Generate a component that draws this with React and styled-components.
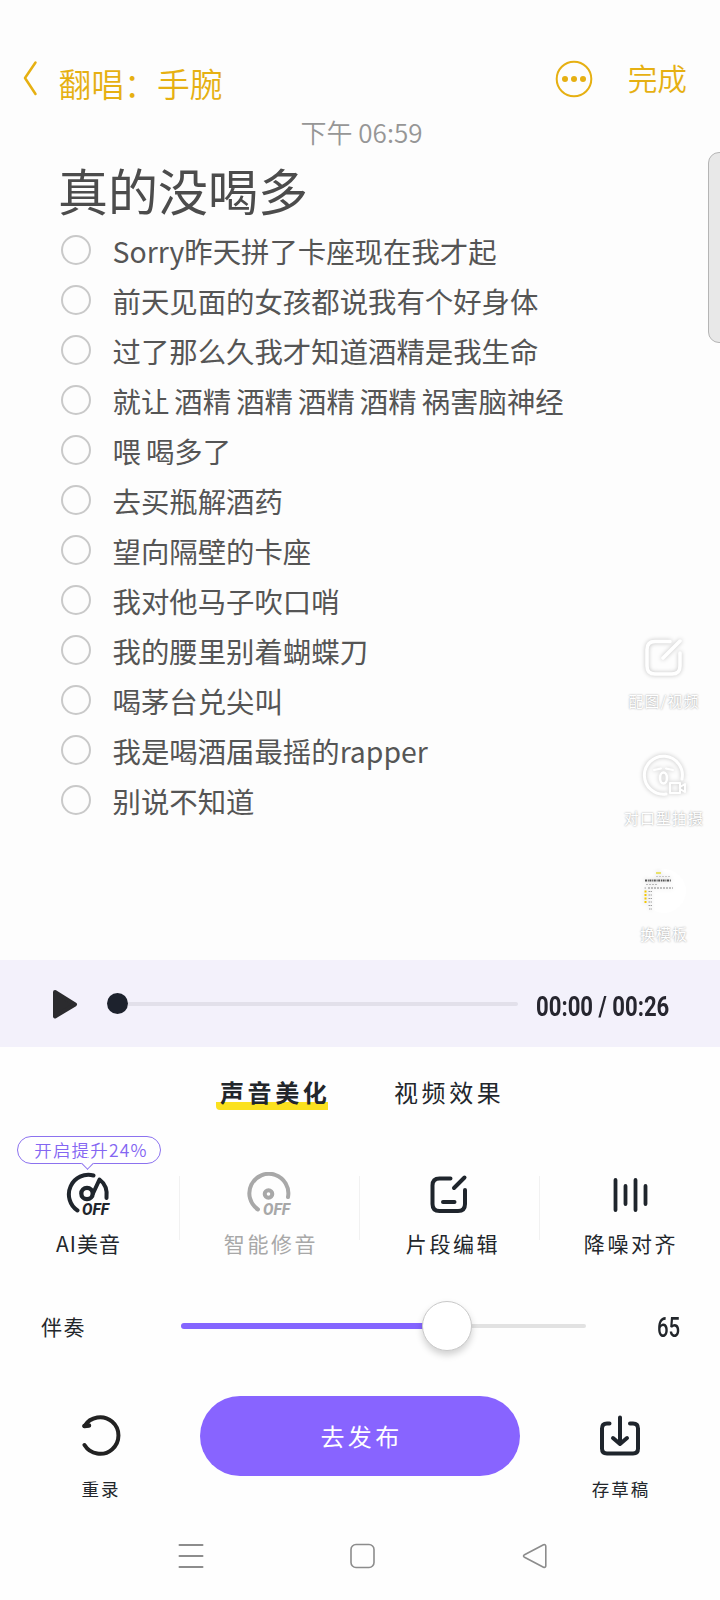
import React, { useState } from "react";
import styled, { createGlobalStyle, css } from "styled-components";

// constants
const LYRICS = [
  "Sorry昨天拼了卡座现在我才起",
  "前天见面的女孩都说我有个好身体",
  "过了那么久我才知道酒精是我生命",
  "就让 酒精 酒精 酒精 酒精 祸害脑神经",
  "喂 喝多了",
  "去买瓶解酒药",
  "望向隔壁的卡座",
  "我对他马子吹口哨",
  "我的腰里别着蝴蝶刀",
  "喝茅台兑尖叫",
  "我是喝酒届最摇的rapper",
  "别说不知道",
];

const GlobalStyle = createGlobalStyle`
  * {
    box-sizing: border-box;
  }
  body {
    margin: 0;
    background: #fefefe;
    font-family: "Noto Sans CJK SC", sans-serif;
    color: #22262b;
  }
  svg {
    display: block;
    flex: none;
    fill: none;
    stroke-linecap: round;
    stroke-linejoin: round;
  }
`;

const Screen = styled.div`
  width: 720px;
  height: 1600px;
  overflow: hidden;
  display: flex;
  flex-direction: column;
`;

/* note */
const Note = styled.section`
  position: relative;
  height: 960px;
  background: #fdfdfd;
  font-weight: 350;
`;
const NoteHeader = styled.header`
  display: flex;
  align-items: center;
  height: 118px;
  padding: 40px 33px 0 22px;
  color: #e6b012;
`;
const NoteName = styled.div`
  flex: 1;
  margin: 8px 0 0 20.5px;
  font-size: 32.8px;
  line-height: 40px;
`;
const DoneButton = styled.div`
  margin: -2px 0 0 35px;
  font-size: 29.7px;
  line-height: 40px;
`;
const NoteTime = styled.div`
  height: 32px;
  padding-left: 3px;
  margin-top: -2px;
  margin-bottom: 2px;
  text-align: center;
  font-size: 26px;
  line-height: 32px;
  color: #969696;
`;
const NoteTitle = styled.h1`
  margin: 0;
  height: 75px;
  padding: 2px 0 0 58px;
  font-size: 50px;
  line-height: 75px;
  font-weight: 400;
  color: #4c4c4c;
`;
const LyricList = styled.ul`
  margin: 0;
  padding: 0 0 0 61px;
  list-style: none;
`;
const Lyric = styled.li`
  display: flex;
  align-items: center;
  height: 50px;
  font-size: 28.4px;
  font-weight: 400;
  white-space: pre;
  word-spacing: -1.3px;
  color: #555;
`;
const LyricText = styled.span`
  margin: 2px 0 0 21px;
  line-height: 40px;
`;
const Bullet = styled.span`
  width: 30px;
  height: 30px;
  margin-right: 0.5px;
  border: 2px solid #c9c9c9;
  border-radius: 50%;
`;
const EdgeHandle = styled.div`
  position: absolute;
  top: 152px;
  right: -12px;
  width: 24px;
  height: 191px;
  background: #e8e8e8;
  border: 1px solid #b5b5b5;
  border-radius: 11px;
`;
const SideBar = styled.aside`
  position: absolute;
  top: 636px;
  right: 10px;
  width: 92px;
  display: flex;
  flex-direction: column;
`;
const SideItem = styled.div`
  display: flex;
  flex-direction: column;
  align-items: center;
  height: 116.5px;
  svg {
    filter: drop-shadow(0 0 2px rgba(0, 0, 0, 0.24));
  }
`;
const SideLabel = styled.span`
  margin-top: 9px;
  font-size: 15px;
  line-height: 24px;
  letter-spacing: 1px;
  font-weight: 400;
  color: #fff;
  text-shadow: 0 0 2px rgba(0, 0, 0, 0.42);
`;
const Thumb = styled.div`
  width: 44px;
  height: 44px;
  padding-top: 3px;
  border-radius: 50%;
  background: #fff;
`;

/* player */
const Player = styled.section`
  display: flex;
  align-items: center;
  height: 87px;
  padding-left: 52px;
  background: #f3f1fb;
`;
const Seek = styled.div`
  display: flex;
  align-items: center;
  width: 411px;
  margin-left: 29px;
`;
const SeekKnob = styled.span`
  width: 21px;
  height: 21px;
  border-radius: 50%;
  background: #1d222d;
`;
const SeekTrack = styled.span`
  flex: 1;
  height: 4px;
  border-radius: 0 2px 2px 0;
  background: #e2e0ea;
`;
const Narrow = styled.span`
  display: inline-block;
  padding-top: 3px;
  font-family: Roboto, sans-serif;
  font-size: 27.5px;
  font-weight: ${(props) => props.$weight};
  line-height: 32px;
  white-space: nowrap;
  transform: scaleX(${(props) => props.$ratio});
  transform-origin: left center;
`;
const Clock = styled.div`
  width: 140px;
  margin: 3px 0 0 18px;
  color: #26262f;
`;

/* tabs */
const Tabs = styled.nav`
  display: flex;
  height: 89px;
  padding: 26px 0 0 216px;
`;
const Tab = styled.div`
  width: 112px;
  height: 37px;
  padding-left: 4px;
  font-size: 24px;
  line-height: 37px;
  letter-spacing: 3.6px;
  white-space: nowrap;
  & + & {
    margin-left: 62px;
  }
  ${(props) =>
    props.$active &&
    css`
      font-weight: 700;
      background: linear-gradient(#fbe11e, #fbe11e) 0 29px / 112px 8px no-repeat;
      border-radius: 0 0 0 4px;
    `}
`;

/* tools */
const Tools = styled.section`
  position: relative;
  display: grid;
  grid-template-columns: repeat(4, 180px);
  height: 150px;
`;
const Tool = styled.div`
  display: flex;
  flex-direction: column;
  align-items: center;
  padding-top: 36px;
  color: ${(props) => (props.$disabled ? "#a8a8a8" : "#22262b")};
  background: ${(props) =>
    props.$last
      ? "none"
      : "linear-gradient(#f1f1f1, #f1f1f1) right 40px / 1px 64px no-repeat"};
  background-position: right 0 top 40px;
`;
const ToolLabel = styled.span`
  margin: 9px 0 0 ${(props) => props.$shift || "2px"};
  font-size: 21px;
  line-height: 32px;
  letter-spacing: ${(props) => props.$spacing || "2.6px"};
`;
const Tip = styled.div`
  position: absolute;
  top: 0;
  left: 17px;
  width: 144px;
  height: 28px;
  padding-left: 4px;
  border: 1px solid #8c72ef;
  border-radius: 14px;
  background: #fff;
  color: #8466f2;
  font-size: 17.5px;
  line-height: 26px;
  font-weight: 350;
  letter-spacing: 1.2px;
  text-align: center;
  white-space: nowrap;
  &::after {
    content: "";
    position: absolute;
    left: 65px;
    bottom: -5px;
    width: 8px;
    height: 8px;
    background: #fff;
    border: solid #8c72ef;
    border-width: 0 1px 1px 0;
    transform: rotate(45deg);
  }
`;

/* volume */
const VolumeRow = styled.section`
  display: flex;
  align-items: center;
  height: 80px;
  padding-left: 41px;
`;
const VolumeLabel = styled.span`
  width: 140px;
  font-size: 21px;
  line-height: 32px;
  letter-spacing: 1.5px;
`;
const VolumeTrack = styled.div`
  display: flex;
  align-items: center;
  width: 405px;
  margin-right: 71px;
`;
const VolumeFill = styled.span`
  height: 6px;
  border-radius: 3px 0 0 3px;
  background: #8465ff;
`;
const VolumeKnob = styled.span`
  width: 50px;
  height: 50px;
  flex: none;
  margin: 0 -27px 0 -22px;
  border: 1px solid #c9c9c9;
  border-radius: 50%;
  background: #fff;
  box-shadow: 0 4px 7px rgba(0, 0, 0, 0.18);
  z-index: 1;
`;
const VolumeRest = styled.span`
  flex: 1;
  height: 4px;
  border-radius: 0 2px 2px 0;
  background: #e2e2e2;
`;

/* bottom buttons */
const Actions = styled.section`
  display: flex;
  align-items: flex-start;
  justify-content: space-between;
  height: 146px;
  padding-top: 30px;
`;
const Action = styled.div`
  width: 200px;
  display: flex;
  flex-direction: column;
  align-items: center;
  padding-top: 19px;
`;
const ActionLabel = styled.span`
  margin-top: 18px;
  padding-left: 2px;
  font-size: 17.5px;
  line-height: 28px;
  letter-spacing: 2px;
`;
const PublishButton = styled.button`
  width: 320px;
  height: 80px;
  border: 0;
  padding: 0 0 0 3px;
  border-radius: 40px;
  background: #8864ff;
  color: #fff;
  font: 400 24px/36px "Noto Sans CJK SC", sans-serif;
  letter-spacing: 3.4px;
`;
const SystemNav = styled.nav`
  display: flex;
  align-items: center;
  height: 88px;
  padding-left: 178px;
  gap: 146px;
`;

const OffText = ({ fill }) => (
  <text
    x="17"
    y="42.500"
    fill={fill}
    fontFamily="Roboto, sans-serif"
    fontSize="16"
    fontWeight="800"
    fontStyle="italic"
    textLength="27"
    lengthAdjust="spacingAndGlyphs"
  >
    OFF
  </text>
);

const VoiceIcon = () => (
  <svg width="50" height="46" stroke="#1f252c" strokeWidth="4">
    <path d="M12.500 38.500A19.500 19.500 0 0 1 28.500 3.500" />
    <circle cx="22" cy="21.500" r="5.700" strokeWidth="4.300" />
    <path d="M28 21.500L34.500 7.500C40 11.500 42.500 18 41.500 26" />
    <g stroke="none">
      <OffText fill="#1f252c" />
    </g>
  </svg>
);

const TuneIcon = () => (
  <svg width="48" height="46" stroke="#a8a8a8" strokeWidth="4">
    <path d="M12 37.500A19.500 19.500 0 1 1 42 25" />
    <circle cx="22.500" cy="22" r="3.800" strokeWidth="4" />
    <g stroke="none">
      <OffText fill="#a8a8a8" />
    </g>
  </svg>
);

const ClipIcon = () => (
  <svg width="46" height="46" stroke="#1f252c" strokeWidth="4">
    <path d="M23.500 6.500H12.500Q5.500 6.500 5.500 13.500V32Q5.500 39 12.500 39H31Q38 39 38 32V18" />
    <path d="M27 16L37.500 5.500M16 30H27.500" />
  </svg>
);

const AlignIcon = () => (
  <svg width="46" height="46" stroke="#1f252c" strokeWidth="3.800">
    <path d="M8.500 8V38M18.500 14V32M28.500 8V38M38.500 14V32" />
  </svg>
);

const EditIcon = () => (
  <svg width="44" height="44" stroke="#fff" strokeWidth="3.500">
    <path d="M28 5.500H13Q5 5.500 5 13.500V30Q5 38 13 38H30Q38 38 38 30V17" />
    <path d="M21 22L38 5" />
  </svg>
);

const FaceIcon = () => (
  <svg width="46" height="44" stroke="#fff" strokeWidth="3">
    <path d="M25 41A19 19 0 1 1 41 26" />
    <path d="M13 17L20 15.500M25 15.500L32 17" strokeWidth="2" />
    <ellipse cx="22.500" cy="25" rx="3.500" ry="5.500" strokeWidth="2.500" />
    <path d="M29 30H39V40H29ZM39 34L44 31V39L39 36" strokeWidth="2" />
  </svg>
);

// miniature of the note page
const NoteThumb = () => (
  <svg width="44" height="41" strokeWidth=".8">
    <g style={{ strokeLinecap: "butt" }}>
      <path d="M14 1H19" stroke="#e6dc3c" strokeWidth="1.500" />
      <path d="M14 4.500H28" stroke="#bbb" strokeDasharray="2 1" />
      <path d="M3 8.500H29" stroke="#555" strokeWidth="2" strokeDasharray="2 .8 1 .6" />
      <path d="M4 12.500H15" stroke="#aaa" strokeDasharray="2 1" />
      <path d="M6 16H31" stroke="#666" strokeDasharray="2 1" />
      <path
        d="M2.500 19.500H4.500M2.500 23H4.500M2.500 26.500H4.500M2.500 30H4.500"
        stroke="#f3c800"
        strokeWidth="2.200"
      />
      <path
        d="M2.500 16H4M6.500 19.500H10M6.500 23H10M6.500 26.500H10M6.500 30H10M6.500 33.500H10M7 37H10"
        stroke="#888"
        strokeDasharray="1.500 .6"
      />
    </g>
  </svg>
);

export default function App() {
  const [volume] = useState(65);

  return (
    <>
      <GlobalStyle />
      <Screen>
        <Note>
          <NoteHeader>
            <svg width="16" height="38" stroke="currentColor" strokeWidth="2.500">
              <path d="M13.500 2.500L3 18L13.500 34" />
            </svg>
            <NoteName>翻唱：手腕</NoteName>
            <svg width="38" height="38" stroke="currentColor" strokeWidth="2">
              <circle cx="19" cy="19" r="17.300" />
              <g fill="currentColor" stroke="none">
                <circle cx="10" cy="19" r="3" />
                <circle cx="19" cy="19" r="3" />
                <circle cx="28" cy="19" r="3" />
              </g>
            </svg>
            <DoneButton>完成</DoneButton>
          </NoteHeader>
          <NoteTime>下午 06:59</NoteTime>
          <NoteTitle>真的没喝多</NoteTitle>
          <LyricList>
            {LYRICS.map((text, index) => (
              <Lyric key={index}>
                <Bullet />
                <LyricText>{text}</LyricText>
              </Lyric>
            ))}
          </LyricList>
          <EdgeHandle />
          <SideBar>
            <SideItem>
              <EditIcon />
              <SideLabel>配图/视频</SideLabel>
            </SideItem>
            <SideItem>
              <FaceIcon />
              <SideLabel>对口型拍摄</SideLabel>
            </SideItem>
            <SideItem>
              <Thumb>
                <NoteThumb />
              </Thumb>
              <SideLabel>换模板</SideLabel>
            </SideItem>
          </SideBar>
        </Note>

        <Player>
          <svg width="26" height="31" stroke="#2b2b2e" strokeWidth="4">
            <path d="M3 4L23 16.500L3 28.500Z" fill="#2b2b2e" />
          </svg>
          <Seek>
            <SeekKnob />
            <SeekTrack />
          </Seek>
          <Clock>
            <Narrow $weight={700} $ratio={0.805}>00:00 / 00:26</Narrow>
          </Clock>
        </Player>

        <Tabs>
          <Tab $active>声音美化</Tab>
          <Tab>视频效果</Tab>
        </Tabs>

        <Tools>
          <Tool>
            <VoiceIcon />
            <ToolLabel $spacing="1px" $shift="-3px">AI美音</ToolLabel>
          </Tool>
          <Tool $disabled>
            <TuneIcon />
            <ToolLabel>智能修音</ToolLabel>
          </Tool>
          <Tool>
            <ClipIcon />
            <ToolLabel $shift="6px">片段编辑</ToolLabel>
          </Tool>
          <Tool $last>
            <AlignIcon />
            <ToolLabel>降噪对齐</ToolLabel>
          </Tool>
          <Tip>开启提升24%</Tip>
        </Tools>

        <VolumeRow>
          <VolumeLabel>伴奏</VolumeLabel>
          <VolumeTrack>
            <VolumeFill style={{ width: `${volume}%` }} />
            <VolumeKnob />
            <VolumeRest />
          </VolumeTrack>
          <Narrow $weight={500} $ratio={0.74}>{volume}</Narrow>
        </VolumeRow>

        <Actions>
          <Action>
            <svg width="42" height="42" stroke="#222" strokeWidth="4">
              <path d="M5.500 11A18.300 18.300 0 1 1 5.500 30" />
              <path d="M5.500 11L10 10.500" strokeWidth="4.500" />
            </svg>
            <ActionLabel>重录</ActionLabel>
          </Action>
          <PublishButton>去发布</PublishButton>
          <Action>
            <svg width="42" height="42" stroke="#1f252c" strokeWidth="4">
              <path d="M10.500 8.500H8Q3 8.500 3 13.500V33.500Q3 38.500 8 38.500H34Q39 38.500 39 33.500V13.500Q39 8.500 34 8.500H31" />
              <path d="M21 2.500V29M14 23L21 29L28 23" />
            </svg>
            <ActionLabel>存草稿</ActionLabel>
          </Action>
        </Actions>

        <SystemNav>
          <svg width="26" height="26" stroke="#8c8c8c" strokeWidth="2">
            <path d="M1.500 2H24.500M1.500 13H24.500M1.500 24H24.500" />
          </svg>
          <svg width="26" height="26" stroke="#8c8c8c" strokeWidth="1.600">
            <rect x="1" y="1.500" width="23" height="23" rx="5" />
          </svg>
          <svg width="26" height="26" stroke="#8c8c8c" strokeWidth="1.600">
            <path d="M2.500 11.800L21.500 1.800Q23.800 1 23.800 3.500V22.500Q23.800 25 21.500 24.200L2.500 14.200Q.5 13 2.500 11.800Z" />
          </svg>
        </SystemNav>
      </Screen>
    </>
  );
}
